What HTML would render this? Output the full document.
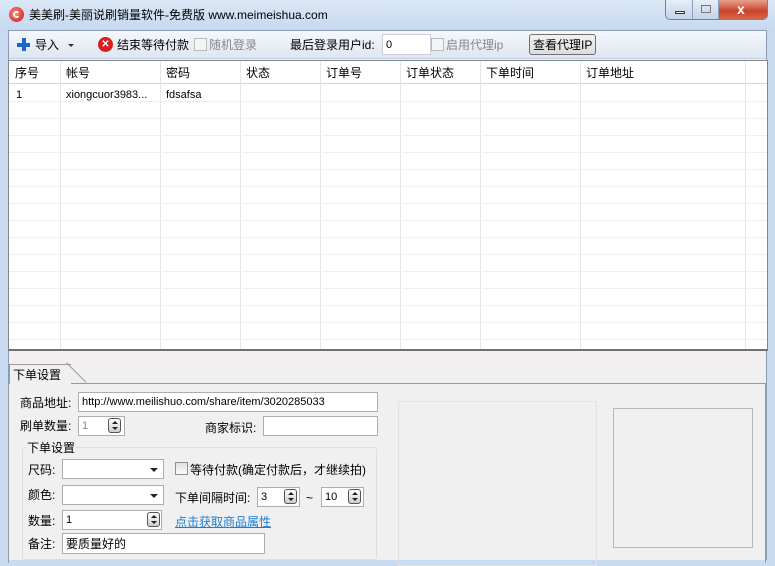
<!DOCTYPE html>
<html><head><meta charset="utf-8"><style>
*{box-sizing:border-box;margin:0;padding:0}
body{width:775px;height:560px;overflow:hidden;background:#c9dbf0;font-family:"Liberation Sans","Noto Sans CJK SC",sans-serif;font-size:12px;line-height:14px;color:#000;position:relative;white-space:nowrap}
.abs{position:absolute}
.title{left:0;top:0;width:775px;height:32px;background:linear-gradient(#dbe8f7,#c5d8ef);}
.frame{left:8px;top:30px;width:759px;height:530px;background:#f0f0f0;border:1px solid #8a9bb3;border-bottom:0}
.tb{left:9px;top:31px;width:757px;height:28px;background:linear-gradient(#f5f8fc,#dde6f2);border-bottom:1px solid #c8d2de}
.grid{left:8px;top:60px;width:760px;height:291px;background:#fff;border:1px solid #828790;border-bottom:2px solid #707070;overflow:hidden}
.hdr{position:absolute;left:0;top:0;height:23px;width:100%;border-bottom:1px solid #d5d5d5;background:#fff}
.col{position:absolute;top:0;bottom:0;border-left:1px solid #e5e5e5}
.ht{position:absolute;top:5px;font-size:12px}
.row{position:absolute;left:0;width:100%;border-top:1px solid #efefef}
.inp{position:absolute;background:#fff;border:1px solid #abadb3;height:20px;font-size:11px;line-height:14px;padding:2px 3px}
.spin{position:absolute;width:13px;height:15px;border:1px solid #555;border-radius:3px;background:linear-gradient(#fff,#ccc)}
.spin:before{content:"";position:absolute;left:3px;top:2px;border:3px solid transparent;border-bottom:3px solid #222;border-top:0}
.spin:after{content:"";position:absolute;left:3px;top:8px;border:3px solid transparent;border-top:3px solid #222;border-bottom:0}
.dd:after{content:"";position:absolute;right:5px;top:8px;border:4px solid transparent;border-top:4px solid #222;border-bottom:0}
.cb{position:absolute;width:13px;height:13px;border:1px solid #8f8f8f;background:linear-gradient(#e0e0e0,#fafafa)}
.t13{font-size:12px}
</style></head><body>
<div class="abs title"></div>
<div class="abs" style="left:9px;top:7px;width:15px;height:15px;border-radius:50%;background:radial-gradient(circle at 40% 40%,#ff8a7a,#c8121a)"></div>
<div class="abs" style="left:13px;top:11px;width:7px;height:7px;border-radius:50%;border:2px solid #fff;border-right-color:transparent"></div>
<div class="abs t13" style="left:29px;top:8px">美美刷-美丽说刷销量软件-免费版 www.meimeishua.com</div>
<div class="abs" style="left:665px;top:0;width:103px;height:20px;border:1px solid #6f84a0;border-top:0;border-radius:0 0 5px 5px;background:linear-gradient(#e6eef8,#c3d3e7);overflow:hidden">
 <div class="abs" style="left:0;top:0;width:27px;height:20px;border-right:1px solid #8ca0bd"></div>
 <div class="abs" style="left:9px;top:11px;width:10px;height:3px;border:1px solid #333;background:#fff"></div>
 <div class="abs" style="left:27px;top:0;width:26px;height:20px;border-right:1px solid #8ca0bd"></div>
 <div class="abs" style="left:35px;top:5px;width:10px;height:8px;border:1px solid #777"></div>
 <div class="abs" style="left:53px;top:0;width:50px;height:20px;background:linear-gradient(#e8a08e,#c8432c 55%,#d66c50)"></div>
 <div class="abs" style="left:71px;top:2px;color:#fff;font-weight:bold;font-size:14px">x</div>
</div>
<div class="abs frame"></div>
<div class="abs tb"></div>
<div class="abs" style="left:17px;top:38px;width:13px;height:13px">
 <div class="abs" style="left:5px;top:0;width:4px;height:13px;background:#1c64c8"></div>
 <div class="abs" style="left:0;top:5px;width:13px;height:4px;background:#1c64c8"></div>
</div>
<div class="abs t13" style="left:35px;top:38px">导入</div>
<div class="abs" style="left:68px;top:44px;border:3px solid transparent;border-top:3px solid #333"></div>
<div class="abs" style="left:98px;top:37px;width:15px;height:15px;border-radius:50%;background:#d81e1e;color:#fff;font-size:10px;font-weight:bold;text-align:center;line-height:15px">✕</div>
<div class="abs t13" style="left:117px;top:38px">结束等待付款</div>
<div class="cb" style="left:194px;top:38px;background:#f4f4f4;border-color:#bbb"></div>
<div class="abs t13" style="left:209px;top:38px;color:#888">随机登录</div>
<div class="abs t13" style="left:290px;top:38px">最后登录用户id:</div>
<div class="inp" style="left:382px;top:34px;width:49px;height:21px;border-color:#ccd;padding-top:3px">0</div>
<div class="cb" style="left:431px;top:38px;background:#f4f4f4;border-color:#bbb"></div>
<div class="abs t13" style="left:446px;top:38px;color:#888">启用代理ip</div>
<div class="abs t13" style="left:529px;top:34px;width:67px;height:21px;border:1px solid #707070;border-radius:3px;background:linear-gradient(#f2f2f2,#dcdcdc);padding:3px 0 0 3px">查看代理IP</div>

<div class="abs grid">
 <div class="hdr"></div>
 <div class="col" style="left:51px"></div><div class="col" style="left:151px"></div><div class="col" style="left:231px"></div><div class="col" style="left:311px"></div><div class="col" style="left:391px"></div><div class="col" style="left:471px"></div><div class="col" style="left:571px"></div><div class="col" style="left:736px"></div>
 <div class="ht" style="left:6px">序号</div><div class="ht" style="left:57px">帐号</div><div class="ht" style="left:157px">密码</div><div class="ht" style="left:237px">状态</div><div class="ht" style="left:317px">订单号</div><div class="ht" style="left:397px">订单状态</div><div class="ht" style="left:477px">下单时间</div><div class="ht" style="left:577px">订单地址</div>
 <div class="abs" style="left:7px;top:27px;font-size:11px">1</div>
 <div class="abs" style="left:57px;top:27px;font-size:11px">xiongcuor3983...</div>
 <div class="abs" style="left:157px;top:27px;font-size:11px">fdsafsa</div>
 <div class="row" style="top:40px"></div><div class="row" style="top:57px"></div><div class="row" style="top:74px"></div><div class="row" style="top:91px"></div><div class="row" style="top:108px"></div><div class="row" style="top:125px"></div><div class="row" style="top:142px"></div><div class="row" style="top:159px"></div><div class="row" style="top:176px"></div><div class="row" style="top:193px"></div><div class="row" style="top:210px"></div><div class="row" style="top:227px"></div><div class="row" style="top:244px"></div><div class="row" style="top:261px"></div><div class="row" style="top:278px"></div>
</div>
<div class="abs" style="left:9px;top:352px;width:757px;height:12px;background:#f3efee"></div>
<div class="abs" style="left:8px;top:383px;width:758px;height:180px;border:1px solid #999;border-bottom:0"></div>
<div class="abs" style="left:9px;top:364px;width:62px;height:20px;background:#f0f0f0;border:1px solid #999;border-bottom:0;border-right:0"></div>
<div class="abs" style="left:66px;top:363px;width:1px;height:28px;background:#999;transform:rotate(-45deg);transform-origin:top left"></div>
<div class="abs t13" style="left:13px;top:368px">下单设置</div>

<div class="abs t13" style="left:20px;top:396px">商品地址:</div>
<div class="inp" style="left:78px;top:392px;width:300px">http://www.meilishuo.com/share/item/3020285033</div>
<div class="abs t13" style="left:20px;top:419px">刷单数量:</div>
<div class="inp" style="left:78px;top:416px;width:47px;color:#888">1</div>
<div class="spin" style="left:108px;top:418px"></div>
<div class="abs t13" style="left:205px;top:421px">商家标识:</div>
<div class="inp" style="left:263px;top:416px;width:115px"></div>
<div class="abs" style="left:22px;top:447px;width:355px;height:113px;border:1px solid #d5dfe5;border-radius:3px"></div>
<div class="abs t13" style="left:26px;top:441px;background:#f0f0f0;padding:0 1px">下单设置</div>
<div class="abs t13" style="left:28px;top:463px">尺码:</div>
<div class="inp dd" style="left:62px;top:459px;width:102px"></div>
<div class="abs t13" style="left:28px;top:488px">颜色:</div>
<div class="inp dd" style="left:62px;top:485px;width:102px"></div>
<div class="abs t13" style="left:28px;top:514px">数量:</div>
<div class="inp" style="left:62px;top:510px;width:100px">1</div>
<div class="spin" style="left:147px;top:512px"></div>
<div class="abs t13" style="left:28px;top:537px">备注:</div>
<div class="inp" style="left:62px;top:533px;width:203px;height:21px;font-size:12px;padding-top:3px">要质量好的</div>
<div class="cb" style="left:175px;top:462px"></div>
<div class="abs t13" style="left:190px;top:463px">等待付款(确定付款后，才继续拍)</div>
<div class="abs t13" style="left:175px;top:491px">下单间隔时间:</div>
<div class="inp" style="left:257px;top:487px;width:43px">3</div>
<div class="spin" style="left:284px;top:489px"></div>
<div class="abs" style="left:306px;top:491px">~</div>
<div class="inp" style="left:321px;top:487px;width:43px">10</div>
<div class="spin" style="left:348px;top:489px"></div>
<div class="abs" style="left:175px;top:515px;color:#1a7fd6;text-decoration:underline">点击获取商品属性</div>
<div class="abs" style="left:398px;top:401px;width:199px;height:165px;border:1px solid #dfe4ea"></div>
<div class="abs" style="left:613px;top:408px;width:140px;height:140px;border:1px solid #b8b8b8"></div>
</body></html>
